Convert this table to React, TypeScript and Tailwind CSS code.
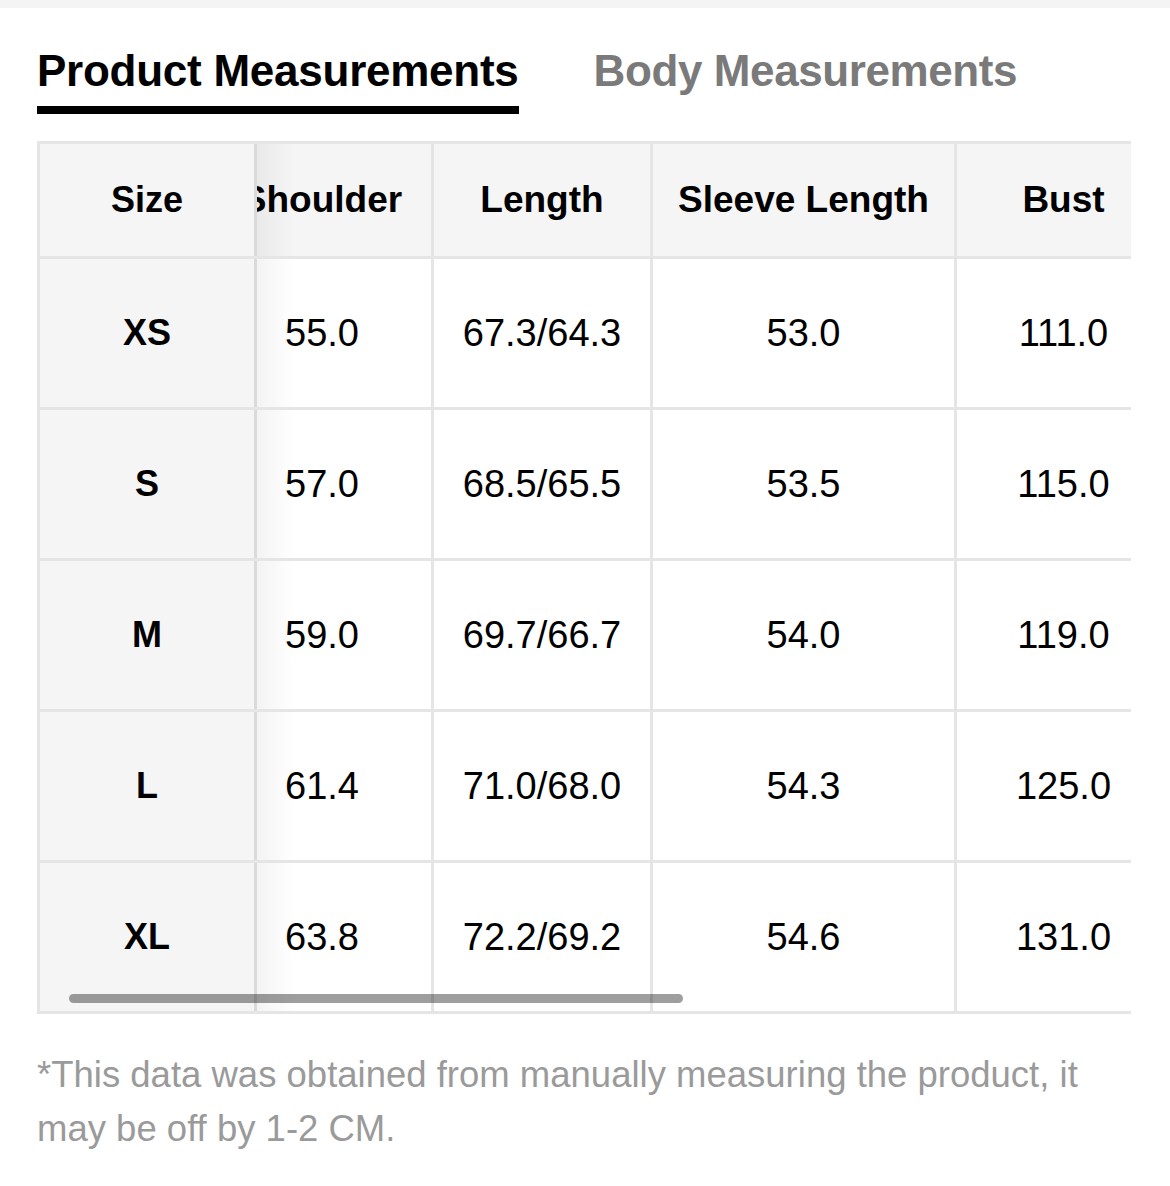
import { useLayoutEffect, useRef } from 'react';

const rows = [
  { size: 'XS', shoulder: '55.0', length: '67.3/64.3', sleeve: '53.0', bust: '111.0' },
  { size: 'S', shoulder: '57.0', length: '68.5/65.5', sleeve: '53.5', bust: '115.0' },
  { size: 'M', shoulder: '59.0', length: '69.7/66.7', sleeve: '54.0', bust: '119.0' },
  { size: 'L', shoulder: '61.4', length: '71.0/68.0', sleeve: '54.3', bust: '125.0' },
  { size: 'XL', shoulder: '63.8', length: '72.2/69.2', sleeve: '54.6', bust: '131.0' },
];

const cell = 'flex items-center justify-center shrink-0 border-r-[3px] border-[#e5e5e5]';

function SizeCell({ children }: { children: React.ReactNode }) {
  return (
    <div
      className={`${cell} sticky left-0 z-10 w-[220px] border-l-[3px] bg-[#f5f5f5] text-[36px] font-bold after:content-[''] after:absolute after:left-full after:top-0 after:bottom-0 after:w-[40px] after:bg-linear-to-r after:from-black/[0.05] after:to-transparent after:pointer-events-none`}
    >
      {children}
    </div>
  );
}

export default function App() {
  const scroller = useRef<HTMLDivElement>(null);

  useLayoutEffect(() => {
    if (scroller.current) scroller.current.scrollLeft = 44;
  }, []);

  return (
    <div className="min-h-screen bg-white font-['Liberation_Sans',Arial,sans-serif] text-black">
      <div className="h-[8px] bg-[#f4f4f4]" />

      <div className="px-[37px]">
        {/* tabs */}
        <div className="flex gap-[75px] pt-[38px]">
          <div className="border-b-[8px] border-black pb-[10px] text-[44px] font-bold leading-[50px] tracking-[-0.25px]">
            Product Measurements
          </div>
          <div className="text-[44px] font-bold leading-[50px] tracking-[-0.4px] text-[#7a7a7a]">
            Body Measurements
          </div>
        </div>

        {/* table */}
        <div className="relative mt-[27px] w-[1094px]">
          <div
            ref={scroller}
            className="overflow-x-auto [scrollbar-width:none] [&::-webkit-scrollbar]:hidden"
          >
            <div className="w-max border-t-[3px] border-[#e5e5e5] text-[38px]">
              <div className="flex h-[115px] border-b-[3px] border-[#e5e5e5] bg-[#f5f5f5] text-[37px] font-bold">
                <SizeCell>Size</SizeCell>
                <div className={`${cell} w-[221px]`}>Shoulder</div>
                <div className={`${cell} w-[219px]`}>Length</div>
                <div className={`${cell} w-[304px]`}>Sleeve Length</div>
                <div className={`${cell} w-[216px]`}>Bust</div>
              </div>
              {rows.map((r) => (
                <div key={r.size} className="flex h-[151px] border-b-[3px] border-[#e5e5e5]">
                  <SizeCell>{r.size}</SizeCell>
                  <div className={`${cell} w-[221px]`}>{r.shoulder}</div>
                  <div className={`${cell} w-[219px]`}>{r.length}</div>
                  <div className={`${cell} w-[304px]`}>{r.sleeve}</div>
                  <div className={`${cell} w-[216px]`}>{r.bust}</div>
                </div>
              ))}
            </div>
          </div>
          {/* overlay scrollbar */}
          <div className="absolute bottom-[11px] left-[32px] z-20 h-[9px] w-[614px] rounded-full bg-black/[0.38]" />
        </div>

        <p className="mt-[34px] w-[1094px] text-[36.5px] leading-[54px] text-[#9a9a9a]">
          *This data was obtained from manually measuring the product, it may be off by 1-2 CM.
        </p>
      </div>
    </div>
  );
}
